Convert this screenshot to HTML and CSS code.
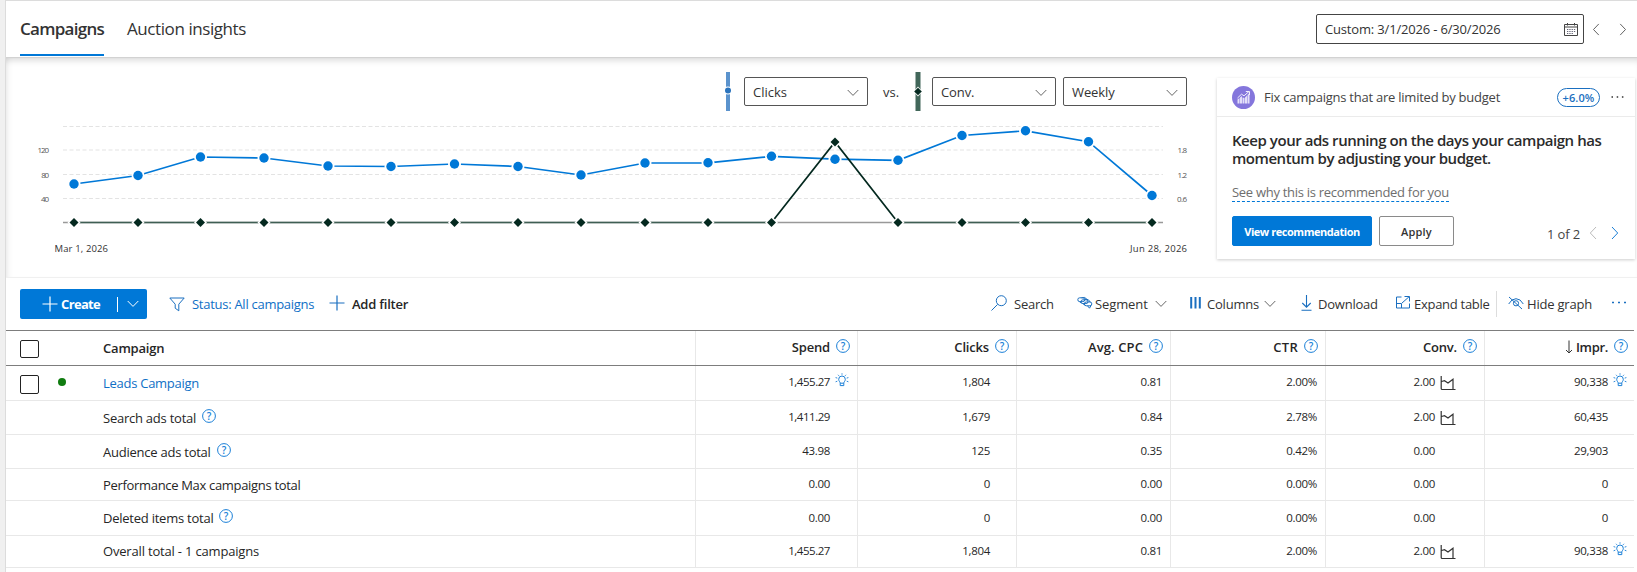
FILE: index.html
```
<!DOCTYPE html>
<html lang="en">
<head>
<meta charset="utf-8">
<title>Campaigns</title>
<link rel="stylesheet" href="styles.css">
</head>
<body>
<svg class="sprite" aria-hidden="true">
  <symbol id="help" viewBox="0 0 14 14"><circle cx="7" cy="7" r="6.400" fill="none" stroke="currentColor"/><text x="7" y="10.600" text-anchor="middle" class="q">?</text></symbol>
  <symbol id="down" viewBox="0 0 12 8"><path d="M.7 1 6 6.4 11.3 1" fill="none" stroke="currentColor"/></symbol>
  <symbol id="left" viewBox="0 0 8 14"><path d="M7 1 1.3 7 7 13" fill="none" stroke="currentColor"/></symbol>
  <symbol id="right" viewBox="0 0 8 14"><path d="M1 1 6.7 7 1 13" fill="none" stroke="currentColor"/></symbol>
  <symbol id="plus" viewBox="0 0 16 16"><path d="M8 .5v15M.5 8h15" fill="none" stroke="currentColor" stroke-width="1.2"/></symbol>
  <symbol id="bulb" viewBox="0 0 14 14"><g fill="none" stroke="currentColor"><path d="M5.2 10.2C5.200 8.800 3.700 8.200 3.700 6.300a3.300 3.300 0 0 1 6.600 0c0 1.900-1.500 2.500-1.500 3.900z"/><path d="M5.200 12.600h3.600M5.200 10.200v2.400M8.800 10.200v2.400" /><path d="M7 .3v1.400M3 1.800l.9 1M11 1.800l-.9 1M.6 4.600l1.700.5M13.400 4.600l-1.700.5M.6 8.800l1.700-.6M13.400 8.800l-1.700-.6" stroke-width=".9"/></g></symbol>
  <symbol id="spark" viewBox="0 0 16 15"><path d="M1.200 0v12.500q0 1 1 1H15.500M1.500 5.500l3-.8 3.500 2.300 5-3.800v10" fill="none" stroke="currentColor" stroke-width="1.200"/></symbol>
</svg>

<div class="page">
  <header class="top">
    <nav class="tabs">
      <a class="tab active">Campaigns</a>
      <a class="tab">Auction insights</a>
    </nav>
    <div class="dates">
      <div class="datebox">
        <span class="datetext">Custom: 3/1/2026 - 6/30/2026</span>
        <svg class="cal" width="14" height="13" viewBox="0 0 14 13"><g fill="none" stroke="#444"><path d="M.5 1.500h13v11H.5zM.5 4h13"/><path d="M3.500 0v2.500M10.500 0v2.500"/><path d="M3 6.500h9M3 8.500h9M3 10.500h6" stroke-dasharray="1.300 1" stroke="#667"/></g></svg>
      </div>
      <svg class="prev" width="8" height="13"><use href="#left"/></svg>
      <svg class="next" width="8" height="13"><use href="#right"/></svg>
    </div>
  </header>

  <section class="overview">
    <div class="chart">
      <div class="controls">
        <svg class="key" width="6" height="39" viewBox="0 0 6 39"><rect width="4" height="39" x="1" fill="#5b93cd"/><circle cx="3" cy="18.500" r="4" fill="#fff"/><circle cx="3" cy="18.500" r="3" fill="#2b74bd"/></svg>
        <div class="select"><span class="s-clicks">Clicks</span><svg width="12" height="8"><use href="#down"/></svg></div>
        <span class="vs">vs.</span>
        <svg class="key2" width="8" height="39" viewBox="0 0 8 39"><rect width="5" height="39" x="1.500" fill="#42675a"/><path d="M4 14.500 8.500 19.500 4 24.500-.5 19.500z" fill="#fff"/><path d="M4 15.700 7.800 19.500 4 23.300.2 19.500z" fill="#04291f"/></svg>
        <div class="select"><span>Conv.</span><svg width="12" height="8"><use href="#down"/></svg></div>
        <div class="select last"><span>Weekly</span><svg width="12" height="8"><use href="#down"/></svg></div>
      </div>
      <svg class="plot" width="1211" height="166" viewBox="6 111 1211 166">
        <path class="grid" d="M63 126.500H1163M63 150H1163M63 174.500H1163M63 198.500H1163"/>
        <path class="axis" d="M63 222.500H1163"/>
        <g class="tick" text-anchor="end">
          <text x="49" y="153" textLength="11.500">120</text><text x="49" y="178" textLength="7.700">80</text><text x="49" y="202" textLength="8">40</text>
          <text x="1187" y="153" textLength="9.500">1.8</text><text x="1187" y="178" textLength="9.500">1.2</text><text x="1187" y="202" textLength="10">0.6</text>
        </g>
        <text class="day" x="54.500" y="252" textLength="53.500">Mar 1, 2026</text>
        <text class="day" x="1130" y="252" textLength="57">Jun 28, 2026</text>
        <polyline class="clicks" points="74,184 138,175.500 200.500,157 264,158 328,166 391,166.500 454.500,164 518,166.500 581,175 645,163 708,162.800 771.500,156.300 835,159.200 898,160.300 962,135.500 1025.500,130.800 1088.500,141.700 1152,195.500"/>
        <path class="conv flat" d="M74 222.500H771.500M898 222.500H1152"/>
        <path class="conv" d="M771.500 222.500 835 142 898 222.500"/>
        <g id="dots"></g>
      </svg>
    </div>

    <aside class="card">
      <div class="card-head">
        <svg class="badge" width="23" height="23" viewBox="0 0 23 23"><circle cx="11.500" cy="11.500" r="11.500" fill="#8476dc"/><path d="M5.500 17.500v-4l2-1.500v5.500zM8 17.500v-6l2-1.500v7.500zM10.500 17.500v-6l2 .5v5.500zM13 17.500v-6l2-2v8zM15.500 17.500V9l2-2v10.500z" fill="#e4e0f9"/><path d="M5.500 12 9.500 8.200l2.500 1.600 5-4.300M13.800 5.500h3.700V9" fill="none" stroke="#f1effc"/></svg>
        <span class="card-title">Fix campaigns that are limited by budget</span>
        <span class="pill">+6.0%</span>
        <svg class="dots" width="13" height="3" viewBox="0 0 13 3"><path d="M.5 1h1.500M5.700 1h1.500M10.900 1h1.500" stroke="#333" stroke-width="1.500"/></svg>
      </div>
      <div class="card-body">
        <div class="advice">Keep your ads running on the days your campaign has<br>momentum by adjusting your budget.</div>
        <a class="why">See why this is recommended for you</a>
        <div class="actions">
          <button class="btn primary">View recommendation</button>
          <button class="btn">Apply</button>
          <span class="pager">1 of 2</span>
          <svg class="pprev" width="8" height="14"><use href="#left"/></svg>
          <svg class="pnext" width="8" height="14"><use href="#right"/></svg>
        </div>
      </div>
    </aside>
  </section>

  <div class="toolbar">
    <div class="create"><svg width="16" height="16"><use href="#plus"/></svg><span class="create-t">Create</span><i></i><svg width="12" height="8"><use href="#down"/></svg></div>
    <svg class="filter blue" width="16" height="15" viewBox="0 0 16 15"><path d="M.8 1h14.400L9.800 7.200V13.800L6.200 11.200V7.200z" fill="none" stroke="currentColor"/></svg>
    <span class="status">Status: All campaigns</span>
    <svg class="addplus blue" width="16" height="16"><use href="#plus"/></svg>
    <span class="addfilter">Add filter</span>
    <div class="tools">
      <svg class="blue" width="16" height="16" viewBox="0 0 16 16"><circle cx="10.300" cy="5.700" r="5" fill="none" stroke="currentColor"/><path d="M6.600 9.400.5 15.500" stroke="currentColor"/></svg>
      <span class="t-search">Search</span>
      <svg class="blue seg" width="16" height="14" viewBox="0 0 16 14"><g fill="none" stroke="currentColor"><rect x=".8" y="1.800" width="7" height="3.800" rx="1.900"/><rect x="4" y="3.800" width="7" height="3.800" rx="1.900"/><rect x="7.300" y="6" width="7.500" height="3.800" rx="1.900"/><path d="M4.500 1.800Q8 .3 10.500 3.800M8 3.200Q12 2.800 13.200 6M2.500 5.600l1.700 1.700M6 7.600l1.700 1.700M10.500 9.800l2 2.400 1.500-2.600"/></g></svg>
      <span class="t-segment">Segment</span>
      <svg class="chev" width="12" height="8"><use href="#down"/></svg>
      <svg class="blue cols" width="11" height="12" viewBox="0 0 11 12"><path d="M1.200 0v11.500M5.500 0v11.500M9.800 0v11.500" stroke="currentColor" stroke-width="2"/></svg>
      <span class="t-columns">Columns</span>
      <svg class="chev" width="12" height="8"><use href="#down"/></svg>
      <svg class="blue dl" width="11" height="16" viewBox="0 0 11 16"><path d="M5.500 0v12M1.300 8l4.200 4.200L9.700 8M.5 15.300h10" fill="none" stroke="currentColor" stroke-width="1.100"/></svg>
      <span class="t-download">Download</span>
      <svg class="blue ex" width="14" height="13" viewBox="0 0 14 13"><path d="M5.500 1H.5v11h13V7.500M.5 7.500h5v4.500M6 7 13 .8M8.500.5h5v5" fill="none" stroke="currentColor"/></svg>
      <span class="t-expand">Expand table</span>
      <i class="sep"></i>
      <svg class="blue hide" width="16" height="14" viewBox="0 0 16 14"><g fill="none" stroke="currentColor"><path d="M.7 8Q3.500 2.700 8 2.700T15.300 8M1 1l13 12"/><circle cx="8" cy="7.300" r="2.600"/></g></svg>
      <span class="t-hide">Hide graph</span>
      <svg class="blue more" width="14" height="3" viewBox="0 0 14 3"><path d="M0 1.500h2M6 1.500h2M12 1.500h2" stroke="currentColor" stroke-width="1.600"/></svg>
    </div>
  </div>

  <div class="table">
    <div class="row head">
      <div class="name"><i class="check"></i><b>Campaign</b></div>
      <div class="h"><b>Spend</b><svg><use href="#help"/></svg></div>
      <div class="h"><b>Clicks</b><svg><use href="#help"/></svg></div>
      <div class="h"><b class="w-cpc">Avg. CPC</b><svg><use href="#help"/></svg></div>
      <div class="h"><b class="w-ctr">CTR</b><svg><use href="#help"/></svg></div>
      <div class="h"><b>Conv.</b><svg><use href="#help"/></svg></div>
      <div class="h impr"><svg class="sort" viewBox="0 0 8 14"><path d="M4 .5v12.500M1 10l3 3 3-3" fill="none" stroke="#333"/></svg><b>Impr.</b><svg><use href="#help"/></svg></div>
    </div>
    <div class="row r1">
      <div class="name"><i class="check"></i><i class="live"></i><a class="leads">Leads Campaign</a></div>
      <div class="v a long">1,455.27<svg class="bulb"><use href="#bulb"/></svg></div><div class="v b">1,804</div><div class="v c">0.81</div><div class="v c">2.00%</div><div class="v d">2.00<svg class="spark"><use href="#spark"/></svg></div><div class="v e">90,338<svg class="bulb"><use href="#bulb"/></svg></div>
    </div>
    <div class="row r2">
      <div class="name"><span>Search ads total</span><svg class="help"><use href="#help"/></svg></div>
      <div class="v a long">1,411.29</div><div class="v b">1,679</div><div class="v c">0.84</div><div class="v c">2.78%</div><div class="v d">2.00<svg class="spark"><use href="#spark"/></svg></div><div class="v e">60,435</div>
    </div>
    <div class="row r3">
      <div class="name"><span>Audience ads total</span><svg class="help"><use href="#help"/></svg></div>
      <div class="v a">43.98</div><div class="v b">125</div><div class="v c">0.35</div><div class="v c">0.42%</div><div class="v d">0.00</div><div class="v e">29,903</div>
    </div>
    <div class="row r4">
      <div class="name"><span class="n-pmax">Performance Max campaigns total</span></div>
      <div class="v a">0.00</div><div class="v b">0</div><div class="v c">0.00</div><div class="v c">0.00%</div><div class="v d">0.00</div><div class="v e">0</div>
    </div>
    <div class="row r5">
      <div class="name"><span>Deleted items total</span><svg class="help"><use href="#help"/></svg></div>
      <div class="v a">0.00</div><div class="v b">0</div><div class="v c">0.00</div><div class="v c">0.00%</div><div class="v d">0.00</div><div class="v e">0</div>
    </div>
    <div class="row r6">
      <div class="name"><span class="n-all">Overall total - 1 campaigns</span></div>
      <div class="v a long">1,455.27</div><div class="v b">1,804</div><div class="v c">0.81</div><div class="v c">2.00%</div><div class="v d">2.00<svg class="spark"><use href="#spark"/></svg></div><div class="v e">90,338<svg class="bulb"><use href="#bulb"/></svg></div>
    </div>
  </div>
</div>
<script src="chart.js"></script>
</body>
</html>
```
FILE: chart.js
```
// Markers for both series: circles for clicks, diamonds for conversions.
const clicks = document.querySelector(".clicks").getAttribute("points").trim().split(" ").map(p => p.split(",").map(Number));
let marks = "";
for (const [x, y] of clicks) {
  const dy = x === 835 ? 142 : 222.5;
  marks += `<circle cx="${x}" cy="${y}" r="6.500" fill="#fff"/><circle cx="${x}" cy="${y}" r="4.700" fill="#0078d7"/>`;
  marks += `<path d="M${x} ${dy - 6.5}l6.500 6.500-6.500 6.500-6.500-6.500z" fill="#fff"/><path d="M${x} ${dy - 4.5}l4.500 4.500-4.500 4.500-4.500-4.500z" fill="#04291f"/>`;
}
document.getElementById("dots").innerHTML = marks;
```
FILE: styles.css
```
* { box-sizing: border-box; }
body { margin: 0; background: #f0f0f0; color: #262626; font: 13px/18px "Open Sans", "Noto Sans", sans-serif; letter-spacing: -0.22px; width: 1637px; height: 572px; overflow: hidden; white-space: nowrap; }
svg { display: block; flex: none; overflow: visible; }
i { display: block; flex: none; }
b { font-weight: 600; }
.sprite { position: absolute; width: 0; height: 0; }
.q { font: 600 10px "Open Sans", sans-serif; letter-spacing: 0; fill: currentColor; }
.blue { color: #1a6fc0; }

.page { margin-left: 5px; border-left: 1px solid #dcdcdc; background: #fff; height: 572px; }
.top { height: 58px; border-top: 1px solid #dcdcdc; border-bottom: 1px solid #d2d2d2; display: flex; justify-content: space-between; padding-left: 14px; background: #fff; }
.tabs { display: flex; gap: 23px; font-size: 17px; line-height: 55px; letter-spacing: -0.42px; color: #333; height: 55px; }
.tab.active { width: 84px; font-weight: 600; letter-spacing: -0.72px; border-bottom: 2px solid #0078d7; }
.dates { display: flex; align-items: center; color: #555; height: 56px; }
.datebox { width: 268px; height: 30px; border: 1px solid #444; border-radius: 2px; padding: 0 5px 0 8px; display: flex; align-items: center; justify-content: space-between; color: #333; }
.datetext { letter-spacing: -0.17px; }
.prev { margin-left: 8px; }
.next { margin: 0 10px 0 19px; }

.overview { height: 220px; display: flex; border-bottom: 1px solid #f0f0f0; box-shadow: inset 0 7px 7px -5px rgba(0,0,0,.16), inset 6px 0 6px -5px rgba(0,0,0,.1); }
.chart { width: 1211px; padding-top: 14px; }
.controls { height: 39px; display: flex; align-items: center; justify-content: flex-end; padding-right: 30px; }
.select { width: 124px; height: 29px; border: 1px solid #555; border-radius: 2px; display: flex; align-items: center; justify-content: space-between; padding: 0 8px 0 8px; color: #333; letter-spacing: -0.1px; }
.select svg { color: #666; margin-top: 3px; }
.select.last { margin-left: 7px; }
.s-clicks { letter-spacing: 0; }
.key { margin-right: 13px; }
.vs { margin-left: 15px; width: 15px; letter-spacing: 0; color: #333; }
.key2 { margin: 0 10px 0 16px; }
.grid { fill: none; stroke: #e3e3e3; stroke-dasharray: 4 2.500; }
.axis { fill: none; stroke: #999; stroke-width: 1.500; }
.tick { font-size: 8px; fill: #555; letter-spacing: 0; }
.day { font-size: 9.500px; fill: #333; letter-spacing: 0; }
.clicks { fill: none; stroke: #0078d7; stroke-width: 1.700; }
.conv { fill: none; stroke: #04291f; stroke-width: 1.700; }
.conv.flat { stroke: #3f5f54; }

.card { width: 418px; height: 181px; margin-top: 20px; background: #fff; box-shadow: 0 1px 3px rgba(0,0,0,.2); }
.card-head { height: 39px; border-bottom: 1px solid #ebebeb; display: flex; align-items: center; padding: 0 11px 0 15px; color: #444; }
.card-title { margin-left: 9px; flex: 1; letter-spacing: -0.24px; }
.pill { width: 43px; height: 19px; border: 1px solid #1a6fc0; border-radius: 10px; color: #1a6fc0; font-size: 11px; font-weight: 600; line-height: 17px; text-align: center; letter-spacing: 0.1px; }
.dots { margin-left: 11px; }
.card-body { padding: 14px 15px 0; }
.advice { font-size: 15px; font-weight: 600; letter-spacing: -0.45px; line-height: 18px; color: #2b2b2b; }
.why { display: inline-block; height: 20px; margin-top: 15px; line-height: 21px; border-bottom: 1px dashed #0078d7; color: #6e6e6e; letter-spacing: -0.29px; width: 217px; margin-bottom: 14px; vertical-align: top; }
.actions { display: flex; align-items: center; height: 30px; }
.btn { height: 30px; width: 75px; padding: 0; border: 1px solid #8a8a8a; border-radius: 2px; background: #fff; font: 600 11px "Open Sans", sans-serif; letter-spacing: 0.2px; color: #333; }
.btn.primary { width: 140px; margin-right: 7px; background: #0078d7; border-color: #0078d7; color: #fff; font-weight: 700; letter-spacing: -0.46px; }
.pager { margin: 6px 9px 0 auto; letter-spacing: -0.14px; color: #444; }
.pprev { color: #bbb; margin: 3px 14px 0 0; }
.pnext { color: #1a7fd7; margin-top: 3px; margin-right: 1px; }

.toolbar { height: 52px; display: flex; align-items: center; padding: 0 11px 0 14px; }
.create { width: 127px; height: 30px; background: #0078d7; border-radius: 2px; color: #fff; font-weight: 700; display: flex; align-items: center; padding-left: 22px; }
.create-t { width: 56px; margin-left: 3px; letter-spacing: -0.65px; }
.create i { width: 1px; height: 15px; background: #fff; margin-right: 9px; }
.create > svg:last-child { margin-top: -1px; }
.filter { margin-left: 22px; }
.status { width: 123px; margin-left: 7px; color: #0f6fc6; letter-spacing: -0.27px; }
.addplus { margin-left: 14px; margin-top: -2px; }
.addfilter { margin-left: 7px; font-weight: 600; letter-spacing: -0.22px; }
.tools { flex: 1; display: flex; align-items: center; justify-content: flex-end; color: #333; }
.tools .chev { color: #666; margin-left: 7px; }
.tools > .blue { margin-top: -3px; }
.t-search { width: 40px; margin: 0 23px 0 7px; }
.t-segment { width: 53px; margin-left: 2px; letter-spacing: -0.1px; }
.cols { margin-left: 23px; }
.t-columns { width: 50px; margin-left: 6px; }
.dl { margin-left: 25px; }
.t-download { width: 60px; margin-left: 6px; }
.ex { margin-left: 18px; }
.t-expand { width: 78px; margin-left: 4px; letter-spacing: -0.28px; }
.sep { width: 1px; height: 26px; background: #ddd; margin: 0 11px 0 4px; }
.t-hide { width: 65px; margin: 0 20px 0 3px; letter-spacing: -0.2px; }

.table { width: 1628px; border-top: 1px solid #7d7d7d; }
.row { display: grid; grid-template-columns: 689px 162px 159px 154px 155px 159px 150px; border-bottom: 1px solid #e8e8e8; }
.head { height: 35px; border-bottom-color: #7d7d7d; }
.r1, .r5 { height: 35px; }
.r2, .r3 { height: 34px; }
.r4, .r6 { height: 32px; }
.r1 .name, .head .name { padding-left: 14px; }
.name { display: flex; align-items: center; padding-left: 97px; letter-spacing: -0.24px; }
.r6 .name { padding-bottom: 1px; }
.check { width: 19px; height: 19px; border: 1px solid #222; border-radius: 2px; margin-top: 2px; }
.head .check { height: 18px; }
.head .name b { margin-left: 64px; letter-spacing: -0.2px; }
.live { width: 8px; height: 8px; border-radius: 50%; background: #107c10; margin: -3px 37px 0 19px; }
.leads { color: #0f6fc6; letter-spacing: -0.27px; }
.n-pmax { letter-spacing: -0.32px; }
.n-all { letter-spacing: -0.18px; }
.help { width: 14px; height: 14px; margin: -4px 0 0 6px; color: #1a7fd7; }
.h, .v { border-left: 1px solid #e8e8e8; display: flex; align-items: center; justify-content: flex-end; padding: 0 8px 3px 0; }
.h svg { width: 14px; height: 14px; color: #1a7fd7; margin-left: 6px; margin-top: -1px; }
.h { padding-right: 7px; }
.h .sort { width: 8px; margin: 0 3px 0 0; }
.h b { letter-spacing: -0.18px; }
.h .w-cpc { letter-spacing: 0.11px; }
.h .w-ctr { letter-spacing: 0.3px; }
.h.impr b { letter-spacing: -0.32px; }
.h.impr { padding-right: 6px; }
.v { font-size: 11.500px; letter-spacing: -0.3px; padding-bottom: 2px; }
.v.long { letter-spacing: -0.45px; }
.r4 .v, .r5 .v { padding-bottom: 1px; }
.v.a { padding-right: 27px; }
.v.b { padding-right: 26px; }
.v.d { padding-right: 49px; }
.v.e { padding-right: 26px; }
.bulb { width: 14px; height: 14px; margin: -4px -19px 0 5px; color: #1a7fd7; }
.spark { width: 16px; height: 15px; margin: 3px -21px 0 5px; color: #333; }
```
